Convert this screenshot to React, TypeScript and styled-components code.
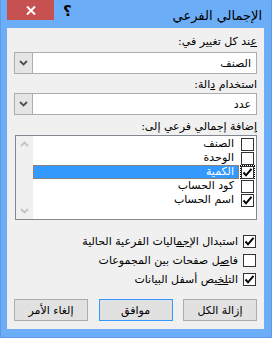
import styled, { createGlobalStyle } from "styled-components";

const GlobalStyle = createGlobalStyle`
  html, body {
    margin: 0;
    padding: 0;
    width: 272px;
    height: 338px;
    overflow: hidden;
    background: #6badf6;
  }
`;

const Frame = styled.div`
  width: 272px;
  height: 338px;
  box-sizing: border-box;
  background: #6badf6;
  border: 1px solid #5b9be4;
  border-top: none;
  display: flex;
  flex-direction: column;
  font-family: "DejaVu Sans", sans-serif;
  font-size: 11px;
  color: #000;
`;

const TitleBar = styled.div`
  height: 28px;
  display: flex;
  justify-content: space-between;
  align-items: flex-start;
  flex-shrink: 0;
`;

const TitleLeft = styled.div`
  display: flex;
  align-items: flex-start;
`;

const CloseButton = styled.div`
  width: 47px;
  height: 20px;
  margin-left: 6px;
  background: #c75050;
  display: flex;
  align-items: center;
  justify-content: center;
`;

const Help = styled.div`
  margin-left: 9px;
  margin-top: 3px;
  font-size: 15px;
  font-weight: bold;
  line-height: 16px;
`;

const Title = styled.div`
  margin-right: 9px;
  margin-top: 8px;
  font-size: 13px;
  line-height: 16px;
  direction: rtl;
`;

const Client = styled.div`
  flex: 1;
  margin: 0 7px 8px 6px;
  background: #f0f0f0;
  direction: rtl;
  padding: 7px 7px 7px 7px;
  display: flex;
  flex-direction: column;
`;

const Label = styled.div<{ $gap: number; $top?: number }>`
  height: 14px;
  line-height: 14px;
  margin-top: ${(p) => p.$top ?? 0}px;
  margin-bottom: ${(p) => p.$gap}px;
  white-space: nowrap;
`;

const Key = styled.span`
  text-decoration: underline;
`;

const Combo = styled.div`
  height: 22px;
  box-sizing: border-box;
  border: 1px solid #adadad;
  background: #fff;
  display: flex;
  align-items: center;
`;

const ComboText = styled.div`
  flex: 1;
  padding-right: 5px;
`;

const DropButton = styled.div`
  width: 17px;
  height: 100%;
  background: #e5e5e5;
  border-right: 1px solid #adadad;
  display: flex;
  align-items: center;
  justify-content: center;
`;

const ListBox = styled.div`
  height: 85px;
  box-sizing: border-box;
  border: 1px solid #828790;
  background: #fff;
  display: flex;
  margin-right: 0;
  margin-left: 1px;
`;

const Items = styled.div`
  flex: 1;
  padding: 1px 1px 0 0;
`;

const Item = styled.div`
  height: 14px;
  display: flex;
  align-items: center;
`;

const ItemText = styled.div<{ $selected?: boolean }>`
  flex: 1;
  height: 14px;
  box-sizing: border-box;
  line-height: 12px;
  padding-right: 4px;
  margin-right: 1px;
  background: ${(p) => (p.$selected ? "#3399ff" : "transparent")};
  color: ${(p) => (p.$selected ? "#fff" : "#000")};
  border: 1px dotted ${(p) => (p.$selected ? "#c86a1a" : "transparent")};
`;

const CheckWrap = styled.div<{ $focus?: boolean }>`
  width: 15px;
  height: 14px;
  box-sizing: border-box;
  display: flex;
  align-items: center;
  justify-content: center;
  border: 1px dotted ${(p) => (p.$focus ? "#000" : "transparent")};
`;

const Box = styled.div`
  width: 13px;
  height: 13px;
  box-sizing: border-box;
  border: 1px solid #333;
  background: #fff;
  display: flex;
  align-items: center;
  justify-content: center;
  flex-shrink: 0;
`;

const ScrollBar = styled.div`
  width: 17px;
  background: #f0f0f0;
  display: flex;
  flex-direction: column;
  justify-content: space-between;
  align-items: center;
  padding: 5px 0;
`;

const Options = styled.div`
  margin-top: 12px;
  display: flex;
  flex-direction: column;
`;

const Option = styled.div`
  height: 19px;
  display: flex;
  align-items: center;
  gap: 5px;
  padding-right: 1px;
`;

const Buttons = styled.div`
  margin-top: 10px;
  display: flex;
  justify-content: space-between;
`;

const Button = styled.div<{ $default?: boolean }>`
  width: 74px;
  height: 22px;
  box-sizing: border-box;
  border: 1px solid ${(p) => (p.$default ? "#3399ff" : "#adadad")};
  background: #e1e1e1;
  display: flex;
  align-items: center;
  justify-content: center;
`;

function Chevron({ color, up }: { color: string; up?: boolean }) {
  return (
    <svg width="9" height="6" viewBox="0 0 9 6">
      <path
        d={up ? "M1 5 L4.5 1.5 L8 5" : "M1 1 L4.5 4.5 L8 1"}
        fill="none"
        stroke={color}
        strokeWidth="1.8"
      />
    </svg>
  );
}

function Check({ on }: { on: boolean }) {
  return (
    <Box>
      {on && (
        <svg width="11" height="11" viewBox="0 0 11 11">
          <path d="M1.5 5.5 L4 8.3 L9.5 1.8" fill="none" stroke="#000" strokeWidth="2" />
        </svg>
      )}
    </Box>
  );
}

function ComboBox({ value }: { value: string }) {
  return (
    <Combo>
      <ComboText>{value}</ComboText>
      <DropButton>
        <Chevron color="#505050" />
      </DropButton>
    </Combo>
  );
}

const fields = [
  { name: "الصنف", on: false },
  { name: "الوحدة", on: false },
  { name: "الكمية", on: true, selected: true },
  { name: "كود الحساب", on: false },
  { name: "اسم الحساب", on: true },
];

export default function App() {
  return (
    <>
      <GlobalStyle />
      <Frame>
        <TitleBar>
          <TitleLeft>
            <CloseButton>
              <svg width="10" height="9" viewBox="0 0 10 9">
                <path d="M1 0.5 L9 8.5 M9 0.5 L1 8.5" stroke="#fff" strokeWidth="2" />
              </svg>
            </CloseButton>
            <Help>؟</Help>
          </TitleLeft>
          <Title>الإجمالي الفرعي</Title>
        </TitleBar>
        <Client>
          <Label $gap={3}>
            <Key>ع</Key>ند كل تغيير في:
          </Label>
          <ComboBox value="الصنف" />
          <Label $top={4} $gap={1}>
            استخدام <Key>د</Key>الة:
          </Label>
          <ComboBox value="عدد" />
          <Label $top={5} $gap={1}>
            <Key>إ</Key>ضافة إجمالي فرعي إلى:
          </Label>
          <ListBox>
            <Items>
              {fields.map((f) => (
                <Item key={f.name}>
                  <CheckWrap $focus={f.selected}>
                    <Check on={f.on} />
                  </CheckWrap>
                  <ItemText $selected={f.selected}>{f.name}</ItemText>
                </Item>
              ))}
            </Items>
            <ScrollBar>
              <Chevron color="#c2c2c2" up />
              <Chevron color="#c2c2c2" />
            </ScrollBar>
          </ListBox>
          <Options>
            <Option>
              <Check on />
              <span>
                استبدال الإ<Key>جم</Key>اليات الفرعية الحالية
              </span>
            </Option>
            <Option>
              <Check on={false} />
              <span>
                فا<Key>ص</Key>ل صفحات بين المجموعات
              </span>
            </Option>
            <Option>
              <Check on />
              <span>
                الت<Key>لخ</Key>يص أسفل البيانات
              </span>
            </Option>
          </Options>
          <Buttons>
            <Button>
              <span>
                <Key>إ</Key>زالة الكل
              </span>
            </Button>
            <Button $default>موافق</Button>
            <Button>إلغاء الأمر</Button>
          </Buttons>
        </Client>
      </Frame>
    </>
  );
}
